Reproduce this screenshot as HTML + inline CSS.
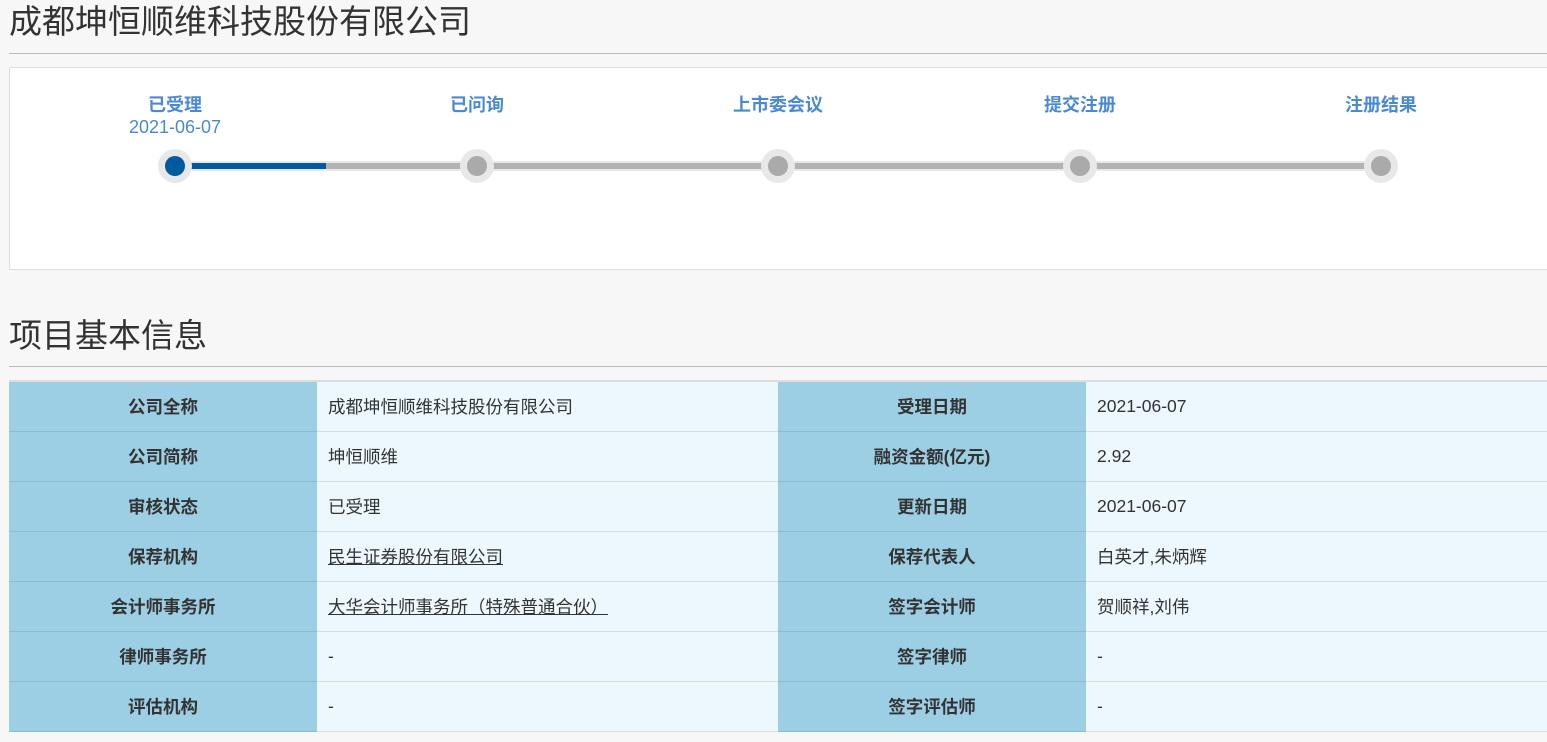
<!DOCTYPE html>
<html><head><meta charset="utf-8"><style>
body{margin:0;background:#f7f7f7;font-family:"Liberation Sans","Noto Sans CJK SC",sans-serif;width:1547px;height:742px;overflow:hidden;position:relative;color:#333}
.h{position:absolute;left:9px;font-size:33px;color:#333;line-height:1}
.hl{position:absolute;left:9px;right:0;height:1px;background:#bbb}
.box{position:absolute;left:9px;top:67px;width:1560px;height:201px;background:#fff;border:1px solid #ddd}
.lab{position:absolute;width:200px;margin-left:-100px;text-align:center;color:#4a8ad0;font-weight:bold;font-size:18px;top:91px}
.date{position:absolute;width:200px;margin-left:-100px;text-align:center;color:#4a8ad0;font-size:18px;top:117px}
.band{position:absolute;top:161px;height:10px;left:175px;width:1206px;background:#e8e8e8}
.core{position:absolute;top:163px;height:6px;left:175px;width:1206px;background:#b3b3b3}
.blue{position:absolute;top:163px;height:6px;left:175px;width:151px;background:#005aa0}
.halo{position:absolute;top:149px;width:34px;height:34px;margin-left:-17px;border-radius:50%;background:#e8e8e8}
.dot{position:absolute;top:156px;width:20px;height:20px;margin-left:-10px;border-radius:50%;background:#aaa}
table{position:absolute;left:9px;top:380px;border-collapse:collapse;width:1538px;border-top:2px solid #ddd}
td{height:49px;border-bottom:1px solid #ddd;font-size:17.5px;padding:0}
td.k{background:#9ccfe4;text-align:center;font-weight:bold;width:308px;border-bottom-color:#8bbdd0}
td.v{background:#ecf8fd;padding-left:11px;width:450px}
u{text-decoration:underline}
</style></head><body>
<div class="h" style="top:5px">成都坤恒顺维科技股份有限公司</div>
<div class="hl" style="top:53px"></div>
<div class="box"></div>
<div class="lab" style="left:175px">已受理</div>
<div class="date" style="left:175px">2021-06-07</div>
<div class="lab" style="left:477px">已问询</div>
<div class="lab" style="left:778px">上市委会议</div>
<div class="lab" style="left:1080px">提交注册</div>
<div class="lab" style="left:1381px">注册结果</div>
<div class="band"></div><div class="core"></div><div class="blue"></div>
<div class="halo" style="left:175px"></div><div class="dot" style="left:175px;background:#005aa0"></div>
<div class="halo" style="left:477px"></div><div class="dot" style="left:477px"></div>
<div class="halo" style="left:778px"></div><div class="dot" style="left:778px"></div>
<div class="halo" style="left:1080px"></div><div class="dot" style="left:1080px"></div>
<div class="halo" style="left:1381px"></div><div class="dot" style="left:1381px"></div>
<div class="h" style="top:319px">项目基本信息</div>
<div class="hl" style="top:366px"></div>
<table>
<tr><td class="k">公司全称</td><td class="v">成都坤恒顺维科技股份有限公司</td><td class="k">受理日期</td><td class="v">2021-06-07</td></tr>
<tr><td class="k">公司简称</td><td class="v">坤恒顺维</td><td class="k">融资金额(亿元)</td><td class="v">2.92</td></tr>
<tr><td class="k">审核状态</td><td class="v">已受理</td><td class="k">更新日期</td><td class="v">2021-06-07</td></tr>
<tr><td class="k">保荐机构</td><td class="v"><u>民生证券股份有限公司</u></td><td class="k">保荐代表人</td><td class="v">白英才,朱炳辉</td></tr>
<tr><td class="k">会计师事务所</td><td class="v"><u>大华会计师事务所（特殊普通合伙）</u></td><td class="k">签字会计师</td><td class="v">贺顺祥,刘伟</td></tr>
<tr><td class="k">律师事务所</td><td class="v">-</td><td class="k">签字律师</td><td class="v">-</td></tr>
<tr><td class="k">评估机构</td><td class="v">-</td><td class="k">签字评估师</td><td class="v">-</td></tr>
</table>
</body></html>
